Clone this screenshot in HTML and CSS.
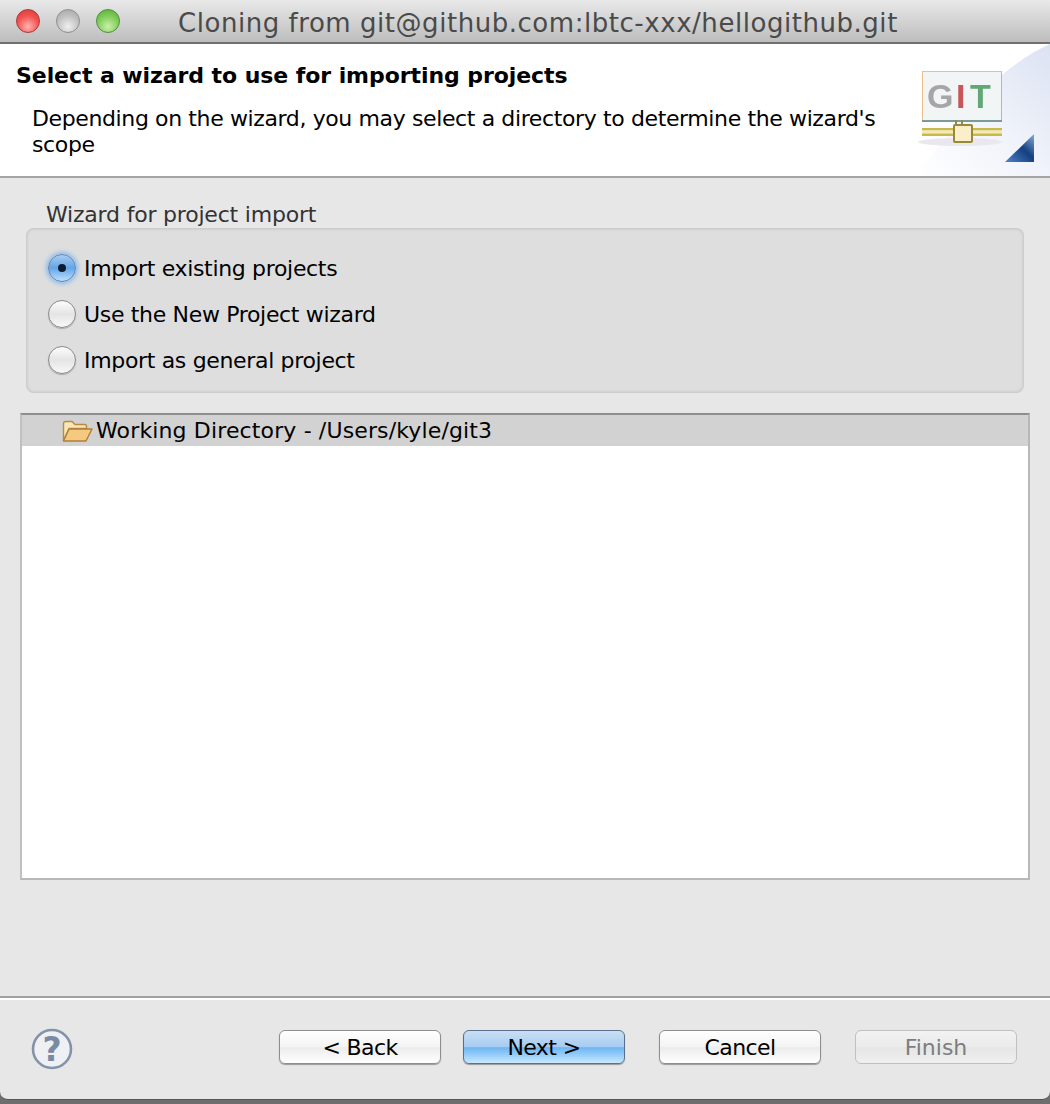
FILE: index.html
```html
<!DOCTYPE html>
<html lang="en">

<head>
    <meta charset="UTF-8">
    <meta name="viewport" content="width=device-width, initial-scale=1.0">
    <title>Cloning from git@github.com:lbtc-xxx/hellogithub.git</title>
    <link rel="stylesheet" href="styles.css">
</head>

<body>
    <div class="window">
        <div class="titlebar">
            <span class="light red"></span>
            <span class="light grey"></span>
            <span class="light green"></span>
            <div class="title">Cloning from git@github.com:lbtc-xxx/hellogithub.git</div>
        </div>

        <div class="banner">
            <div class="banner-text">
                <h1>Select a wizard to use for importing projects</h1>
                <p>Depending on the wizard, you may select a directory to determine the wizard's scope</p>
            </div>
            <div class="banner-art">
                <svg width="135" height="132" viewBox="0 0 135 132">
                    <defs>
                        <linearGradient id="sweep" x1="0" y1="1" x2="1" y2="0">
                            <stop offset="0" stop-color="#ffffff" />
                            <stop offset="0.5" stop-color="#f0f3fa" />
                            <stop offset="1" stop-color="#dbe2f2" />
                        </linearGradient>
                        <linearGradient id="corner" x1="0" y1="1" x2="1" y2="0">
                            <stop offset="0" stop-color="#4f86c6" />
                            <stop offset="0.55" stop-color="#143f80" />
                            <stop offset="1" stop-color="#86abd6" />
                        </linearGradient>
                    </defs>
                    <path d="M0 132 C40 85 70 30 135 0 V132 Z" fill="url(#sweep)" />
                    <ellipse cx="45" cy="98" rx="42" ry="4" fill="#ebe7ef" />
                    <rect x="7.5" y="27.5" width="79" height="50" fill="#f1f5f6" stroke="#a9bcb8" />
                    <path d="M7.5 78 V27.5 H86.5" fill="none" stroke="#efbd87" />
                    <path d="M7 77 H87" stroke="#7c9a98" stroke-width="2" />
                    <text class="git-letter" x="12" y="64" fill="#a6a6a6">G</text>
                    <text class="git-letter" x="41" y="64" fill="#c8555a">I</text>
                    <text class="git-letter" x="55" y="64" fill="#62a876">T</text>
                    <rect x="7" y="84" width="80" height="2.5" fill="#c9b84a" />
                    <rect x="7" y="86.5" width="80" height="3" fill="#f2eab0" />
                    <rect x="7" y="89.5" width="80" height="2.5" fill="#c9b84a" />
                    <path d="M41 80 V76 M47 80 V76" stroke="#8f8a4a" stroke-width="2" />
                    <rect x="39" y="81" width="18" height="17" rx="1" fill="#fbeecb" stroke="#968a3a" stroke-width="2" />
                    <path d="M119 90 V118 H90 Z" fill="url(#corner)" />
                </svg>
            </div>
        </div>

        <div class="content">
            <div class="group-label">Wizard for project import</div>
            <div class="group">
                <div class="radio-row">
                    <span class="radio checked"></span>
                    <span>Import existing projects</span>
                </div>
                <div class="radio-row">
                    <span class="radio"></span>
                    <span>Use the New Project wizard</span>
                </div>
                <div class="radio-row">
                    <span class="radio"></span>
                    <span>Import as general project</span>
                </div>
            </div>

            <div class="tree">
                <div class="tree-row">
                    <svg class="folder" width="32" height="24" viewBox="0 0 32 24">
                        <path d="M2.5 21.5 V5 Q2.5 2.5 5 2.5 H11 L14 5.5 H24 Q25.5 5.5 25.5 7.5 V9.5 H8 Z" fill="#fbe6b4" stroke="#b98a45" stroke-width="1.4" stroke-linejoin="round" />
                        <path d="M2.5 22 L8 10 H31 L25 22 Z" fill="#f5c97e" stroke="#b07f3c" stroke-width="1.4" stroke-linejoin="round" />
                    </svg>
                    <span>Working Directory - /Users/kyle/git3</span>
                </div>
            </div>
        </div>

        <div class="footer">
            <svg class="help" width="44" height="44" viewBox="0 0 44 44">
                <circle cx="22" cy="22" r="19" fill="#eef0f4" stroke="#8593aa" stroke-width="2.6" />
                <text class="help-mark" x="22" y="34" text-anchor="middle">?</text>
            </svg>
            <div class="buttons">
                <div class="nav-pair">
                    <button class="btn">&lt; Back</button>
                    <button class="btn primary">Next &gt;</button>
                </div>
                <button class="btn">Cancel</button>
                <button class="btn disabled">Finish</button>
            </div>
        </div>
    </div>
</body>

</html>
```
FILE: styles.css
```css
html,
body {
    margin: 0;
    padding: 0;
}

body {
    width: 1050px;
    height: 1104px;
    overflow: hidden;
    background: #6e6e6e;
    font-family: "DejaVu Sans", "Noto Sans", sans-serif;
    font-size: 22px;
    color: #000;
}

.window {
    height: 1100px;
    display: flex;
    flex-direction: column;
    background: #e7e7e7;
    border-radius: 0 0 8px 8px;
    border-bottom: 1px solid #555;
    box-sizing: border-box;
    overflow: hidden;
}

/* title bar */
.titlebar {
    height: 42px;
    flex: none;
    display: flex;
    align-items: center;
    gap: 16px;
    padding-left: 16px;
    position: relative;
    background: linear-gradient(#e9e9e9, #bdbdbd);
    border-bottom: 2px solid #6f6f6f;
}

.light {
    width: 24px;
    height: 24px;
    border-radius: 50%;
    box-sizing: border-box;
    flex: none;
}

.red {
    background: radial-gradient(circle at 50% 75%, #ffb3b0 0, #f2504e 55%, #d93a3a 100%);
    border: 1px solid #a53a3c;
}

.grey {
    background: radial-gradient(circle at 50% 75%, #f0f0f0 0, #bcbcbc 60%, #a6a6a6 100%);
    border: 1px solid #8f8f8f;
}

.green {
    background: radial-gradient(circle at 50% 75%, #c9f0a8 0, #79c851 60%, #59aa3c 100%);
    border: 1px solid #4f8f3f;
}

.title {
    position: absolute;
    left: 178px;
    top: 7px;
    font-size: 26px;
    line-height: 32px;
    letter-spacing: 0.54px;
    color: #4a4a4a;
    white-space: nowrap;
}

/* white banner */
.banner {
    height: 132px;
    flex: none;
    display: flex;
    background: #fff;
    border-bottom: 2px solid #a4a4a4;
}

.banner-text {
    flex: 1;
    padding: 18px 0 0 16px;
}

.banner h1 {
    margin: 0;
    font-size: 22px;
    line-height: 28px;
    font-weight: bold;
    letter-spacing: -0.07px;
}

.banner p {
    margin: 16px 0 0 16px;
    width: 860px;
    line-height: 26px;
    letter-spacing: -0.38px;
}

.banner-art {
    width: 135px;
    flex: none;
}

.git-letter {
    font-family: "Liberation Sans", sans-serif;
    font-size: 34px;
    font-weight: bold;
    filter: blur(0.5px);
}

/* middle */
.content {
    flex: 1;
    padding: 23px 20px 0;
}

.group-label {
    margin-left: 26px;
    line-height: 28px;
    color: #333;
    letter-spacing: -0.2px;
}

.group {
    margin: -1px 6px 0;
    height: 165px;
    box-sizing: border-box;
    padding: 17px 0 0 20px;
    background: #dedede;
    border-radius: 8px;
    box-shadow: inset 0 0 3px 1px #c4c4c4;
    letter-spacing: -0.33px;
}

.radio-row {
    display: flex;
    align-items: center;
    gap: 8px;
    height: 46px;
}

.radio {
    width: 28px;
    height: 28px;
    border-radius: 50%;
    box-sizing: border-box;
    flex: none;
    margin-left: 2px;
    background: linear-gradient(#fdfdfd, #e4e4e4 50%, #f8f8f8);
    border: 1px solid #8a8a8a;
    box-shadow: 0 1px 1px #aaa;
}

.radio.checked {
    position: relative;
    background: linear-gradient(#a7cdf2, #63a5e8 50%, #bde0fb);
    border-color: #5f86b4;
    box-shadow: 0 0 4px 2px #8bbcec;
}

.radio.checked::after {
    content: "";
    position: absolute;
    left: 9px;
    top: 9px;
    width: 8px;
    height: 8px;
    border-radius: 50%;
    background: #0c1c30;
}

.tree {
    margin-top: 20px;
    height: 467px;
    box-sizing: border-box;
    background: #fff;
    border: 2px solid #b8b8b8;
    border-top-color: #8e8e8e;
    border-left-color: #c0c0c0;
}

.tree-row {
    height: 31px;
    display: flex;
    align-items: center;
    padding-left: 39px;
    gap: 3px;
    background: #d2d2d2;
    white-space: nowrap;
    letter-spacing: 0.14px;
}

.folder {
    flex: none;
}

/* bottom buttons */
.footer {
    height: 103px;
    flex: none;
    box-sizing: border-box;
    border-top: 2px solid #a0a0a0;
    display: flex;
    padding: 29px 33px 0 30px;
    box-shadow: inset 0 2px 0 #fff;
}

.help {
    flex: none;
}

.help-mark {
    font-family: "DejaVu Sans", sans-serif;
    font-size: 33px;
    font-weight: bold;
    fill: #7b8aa3;
}

.buttons {
    margin-left: auto;
    margin-top: 3px;
    display: flex;
    gap: 34px;
}

.nav-pair {
    display: flex;
    gap: 22px;
}

.btn {
    width: 162px;
    height: 34px;
    padding: 1px 0 0;
    font-family: inherit;
    font-size: 22px;
    letter-spacing: -0.6px;
    color: #000;
    border: 1px solid #8e8e8e;
    border-radius: 6px;
    background: linear-gradient(#ffffff, #f3f3f3 50%, #ececec 52%, #ffffff);
    box-shadow: 0 1px 1px #9a9a9a;
}

.btn.primary {
    background: linear-gradient(#c9dff5, #a6cbf0 50%, #6db5f4 52%, #c6e8fd);
    border-color: #5c6f8c;
}

.btn.disabled {
    color: #7d7d7d;
    letter-spacing: 0;
    background: linear-gradient(#f2f2f2, #ebebeb 50%, #e5e5e5 52%, #f0f0f0);
    border-color: #c0c0c0;
    box-shadow: none;
}
```
